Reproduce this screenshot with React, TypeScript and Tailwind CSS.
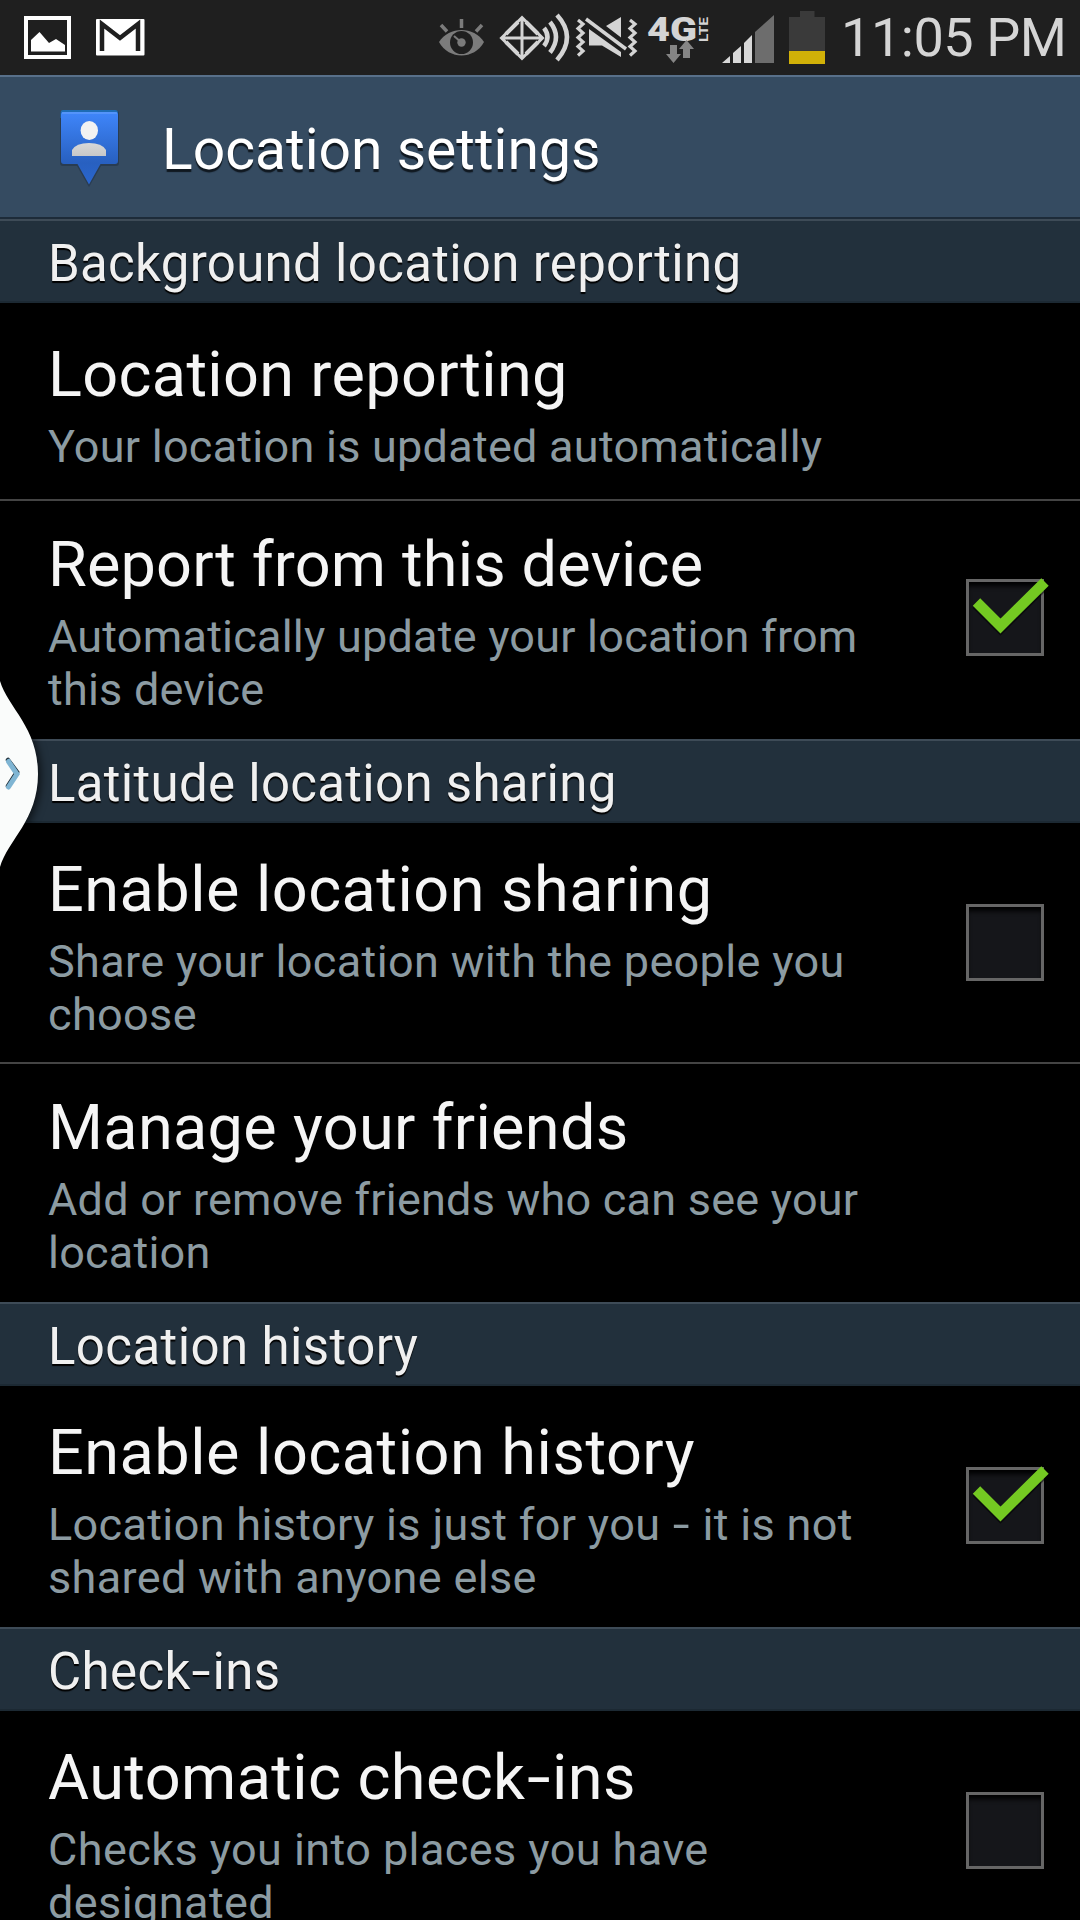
import React from "react";

function StatusBar() {
  return (
    <header className="flex h-[75px] shrink-0 items-start bg-[#1f1f1f]">
      <svg className="h-[75px] w-[840px] shrink-0" viewBox="0 0 840 75" fill="none">
        <rect x="26" y="18" width="43" height="39" stroke="#fff" strokeWidth="4" />
        <path d="M31 40 39.500 32 49 43 56 39 65 45V51.500H31Z" fill="#fff" />
        <rect x="96" y="19" width="48.500" height="36.500" rx="1" fill="#fff" />
        <path d="M102 51V24L120 38 138 24V51" stroke="#1f1f1f" strokeWidth="4.500" />

        <path d="M439 42C449 26 474 26 484 42C474 60 449 60 439 42Z" fill="#7b7b7b" />
        <circle cx="461.500" cy="42.500" r="11.500" fill="#1f1f1f" />
        <circle cx="461.500" cy="42.500" r="4.200" fill="#7b7b7b" />
        <path d="M462 43 454 36" stroke="#7b7b7b" strokeWidth="2" />
        <path d="M461.500 19V28M441 25 447 31.500M482 25 476 31.500" stroke="#7b7b7b" strokeWidth="3.500" />

        <path d="M501.500 38 522 17.500 542.500 38 522 58.500ZM501.500 38H542.500M522 17.500V58.500" stroke="#d4d4d4" strokeWidth="3" />
        <path d="M506 34 518 22M538 34 526 22M506 42 518 54M538 42 526 54" stroke="#d4d4d4" strokeWidth="4" />
        <path d="M544 28Q551 37 544 46M550 22Q562 37 550 52.500M557 15Q577 37 557 60" stroke="#d4d4d4" strokeWidth="4.500" />

        <path d="M578 20 583 24 578 28.500 583 33 578 37.500 583 42 578 46.500 583 51 578 55.500" stroke="#d4d4d4" strokeWidth="3.200" />
        <path d="M630 20 635 24 630 28.500 635 33 630 37.500 635 42 630 46.500 635 51 630 55.500" stroke="#d4d4d4" strokeWidth="3.200" />
        <path d="M589 29 621 52V57L602 45.500H589ZM606 26 621 17V37.500Z" fill="#d4d4d4" />
        <path d="M586 19 626 49" stroke="#d4d4d4" strokeWidth="3.500" />

        <text x="647" y="41" className="font-[Roboto,sans-serif] text-[33px] font-black" fill="#d4d4d4" textLength="50" lengthAdjust="spacingAndGlyphs">4G</text>
        <text transform="translate(708 42) rotate(-90)" className="font-[Roboto,sans-serif] text-[13px] font-bold" fill="#d4d4d4" textLength="25" lengthAdjust="spacingAndGlyphs">LTE</text>
        <path d="M670 45H677V54H681L673.500 63 666 54H670ZM683 58V49H679L686.500 40 694 49H690V58Z" fill="#858585" />

        <path d="M722 63 730 56V63ZM733 63V53L741 46V63ZM744 63V43L752 35V63Z" fill="#d8d8d8" />
        <path d="M755 63V32L774 15V63Z" fill="#6d6d6d" />
        <path d="M789 17H800V11H814.500V17H825V51H789Z" fill="#3a3a3a" />
        <path d="M789 51H825V64H789Z" fill="#d1b108" />
      </svg>
      <time className="ml-[1px] mt-[6px] whitespace-nowrap text-[54px] leading-[64px] tracking-[-0.45px] text-[#d5d5d5]">11:05 PM</time>
    </header>
  );
}

function TitleBar() {
  return (
    <div className="flex h-[144px] shrink-0 items-start border-y-2 border-t-[#58708a] border-b-[#1d2b39] bg-[#354b61]">
      <svg className="ml-[56px] mt-[30px] h-[84px] w-[68px] shrink-0" viewBox="56 107 68 84">
        <defs>
          <linearGradient id="pin" x1="0" y1="0" x2="0" y2="1">
            <stop offset="0" stopColor="#3f86fb" />
            <stop offset="0.700" stopColor="#2860c0" />
            <stop offset="1" stopColor="#2a66cd" />
          </linearGradient>
          <linearGradient id="person" x1="0" y1="0" x2="0" y2="1">
            <stop offset="0" stopColor="#d8d8d8" />
            <stop offset="1" stopColor="#c8c8c8" />
          </linearGradient>
        </defs>
        <path d="M63 111H116Q119 111 119 113V163Q119 166 116 166H101L89 187 77 166H63Q60 166 60 163V113Q60 111 63 111Z" fill="#1d2e42" opacity="0.500" />
        <path d="M63 110H115Q118 110 118 113V118H60.500V113Q60.500 110 63 110Z" fill="#1d6cb5" />
        <path d="M63 112H115Q118 112 118 115V161Q118 164 115 164H100.500L89 184.500 77.500 164H64Q61 164 61 161V115Q61 112 63 112Z" fill="url(#pin)" />
        <path d="M62 113H117" stroke="#6ba3fb" strokeWidth="1" />
        <ellipse cx="89.300" cy="130.500" rx="8.700" ry="9.500" fill="#f2f2f2" />
        <path d="M72 156V150Q76 143 89 143T106 150V156Z" fill="url(#person)" />
      </svg>
      <h1 className="ml-[38px] mt-[39px] whitespace-nowrap text-[57px] leading-[68px] text-white [text-shadow:0_3px_1px_#101820]">Location settings</h1>
    </div>
  );
}

function Label({ text }: { text: string }) {
  const parts = text.split("-");
  return (
    <>
      {parts.map((part, i) => (
        <React.Fragment key={i}>
          {i > 0 && <span className="mx-[0.07em] inline-block scale-x-[1.35]">-</span>}
          {part}
        </React.Fragment>
      ))}
    </>
  );
}

function SectionHeader({ children, tracking = "tracking-[0.3px]" }: { children: string; tracking?: string }) {
  return (
    <h2 className={`h-[84px] shrink-0 whitespace-nowrap border-b-2 border-t-2 border-b-[#1c2933] border-t-[#3e4b57] bg-[#22303c] pl-[48px] pt-[13px] text-[51px] leading-[60px] text-[#f0f0f0] [text-shadow:0_2px_1px_#000] ${tracking}`}>
      <Label text={children} />
    </h2>
  );
}

function CheckBox({ checked, offset }: { checked: boolean; offset: string }) {
  return (
    <div role="checkbox" aria-checked={checked} className={`relative ml-auto mr-[36px] h-[77px] w-[78px] shrink-0 border-[3px] border-[#666] bg-[#15161a] shadow-[inset_0_6px_5px_-2px_#000] ${offset}`}>
      {checked && (
        <svg className="absolute -left-[3px] -top-[6px] h-[70px] w-[90px]" viewBox="0 0 90 70" fill="none">
          <path d="M10.500 26 34.500 50 79 6" stroke="#000" strokeOpacity="0.500" strokeWidth="11" transform="translate(0 2)" />
          <path d="M10.500 26 34.500 50 79 6" stroke="#74c922" strokeWidth="10.500" />
        </svg>
      )}
    </div>
  );
}

type RowProps = {
  title: string;
  titleTracking: string;
  lines: string[];
  lineTracking: string;
  checked?: boolean;
  height: string;
  padding?: string;
  boxOffset?: string;
  divider?: boolean;
};

function Row({ title, titleTracking, lines, lineTracking, checked, height, padding = "pt-[30px]", boxOffset = "mt-[81px]", divider }: RowProps) {
  return (
    <div className={`flex shrink-0 ${height} ${divider ? "border-b-2 border-[#444]" : ""}`}>
      <div className={`whitespace-nowrap pl-[48px] ${padding}`}>
        <div className={`text-[63px] leading-[74px] text-[#f5f5f5] ${titleTracking}`}>
          <Label text={title} />
        </div>
        <div className={`mt-2 text-[45px] leading-[53px] text-[#8c9ba2] ${lineTracking}`}>
          {lines.map((line) => (
            <div key={line}>
              <Label text={line} />
            </div>
          ))}
        </div>
      </div>
      {checked !== undefined && <CheckBox checked={checked} offset={boxOffset} />}
    </div>
  );
}

function EdgeHandle() {
  return (
    <svg className="absolute left-0 top-[670px] h-[210px] w-[60px]" viewBox="0 670 60 210" fill="none">
      <path d="M0 681C8 708 38 727 38 774C38 820 8 840 0 867Z" fill="#fafcfb" className="drop-shadow-[3px_2px_4px_rgba(0,0,0,0.6)]" />
      <path d="M8 760 17 772 8 786" stroke="#20303a" strokeWidth="4.500" strokeLinecap="round" />
      <path d="M8.500 761.500 17 774 8.500 787" stroke="#7fb5d3" strokeWidth="5" strokeLinecap="round" />
    </svg>
  );
}

export default function App() {
  return (
    <main className="relative flex h-[1920px] w-[1080px] flex-col overflow-hidden bg-black font-[Roboto,sans-serif]">
      <StatusBar />
      <TitleBar />
      <SectionHeader>Background location reporting</SectionHeader>
      <Row
        title="Location reporting"
        titleTracking="tracking-[0.33px]"
        lines={["Your location is updated automatically"]}
        lineTracking="tracking-[0.25px]"
        height="h-[198px]"
        padding="pt-[35px]"
        divider
      />
      <Row
        title="Report from this device"
        titleTracking="tracking-[0.16px]"
        lines={["Automatically update your location from", "this device"]}
        lineTracking="tracking-[0.22px]"
        checked
        height="h-[238px]"
        padding="pt-[27px]"
        boxOffset="mt-[78px]"
      />
      <SectionHeader>Latitude location sharing</SectionHeader>
      <Row
        title="Enable location sharing"
        titleTracking="tracking-[0.48px]"
        lines={["Share your location with the people you", "choose"]}
        lineTracking="tracking-[0.35px]"
        checked={false}
        height="h-[241px]"
        divider
      />
      <Row
        title="Manage your friends"
        titleTracking="tracking-[0.32px]"
        lines={["Add or remove friends who can see your", "location"]}
        lineTracking="tracking-[0.22px]"
        height="h-[238px]"
        padding="pt-[27px]"
      />
      <SectionHeader tracking="tracking-[0.4px]">Location history</SectionHeader>
      <Row
        title="Enable location history"
        titleTracking="tracking-[0.5px]"
        lines={["Location history is just for you - it is not", "shared with anyone else"]}
        lineTracking="tracking-[0.34px]"
        checked
        height="h-[241px]"
      />
      <SectionHeader tracking="tracking-[0.4px]">Check-ins</SectionHeader>
      <Row
        title="Automatic check-ins"
        titleTracking="tracking-[0.4px]"
        lines={["Checks you into places you have", "designated"]}
        lineTracking="tracking-[0.42px]"
        checked={false}
        height="h-[241px]"
      />
      <EdgeHandle />
    </main>
  );
}
